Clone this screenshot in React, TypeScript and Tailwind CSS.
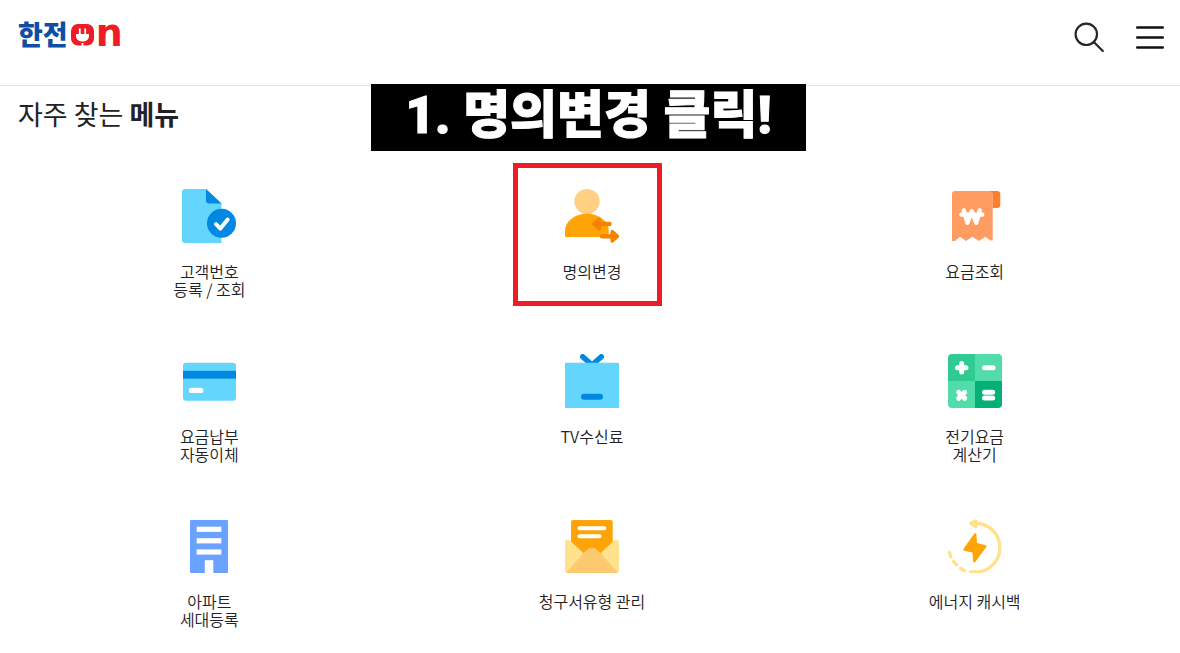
import React from "react";

interface MenuItem {
  id: string;
  lines: string[];
  icon: React.ReactNode;
  highlighted?: boolean;
}

const MENU_ITEMS: MenuItem[] = [
  { id: "customer", lines: ["고객번호", "등록 / 조회"], icon: <DocumentIcon /> },
  { id: "transfer", lines: ["명의변경"], icon: <PersonIcon />, highlighted: true },
  { id: "bill", lines: ["요금조회"], icon: <ReceiptIcon /> },
  { id: "payment", lines: ["요금납부", "자동이체"], icon: <CardIcon /> },
  { id: "tv", lines: ["TV수신료"], icon: <TvIcon /> },
  { id: "calculator", lines: ["전기요금", "계산기"], icon: <CalculatorIcon /> },
  { id: "apartment", lines: ["아파트", "세대등록"], icon: <BuildingIcon /> },
  { id: "invoice", lines: ["청구서유형 관리"], icon: <MailIcon /> },
  { id: "cashback", lines: ["에너지 캐시백"], icon: <EnergyIcon /> },
];

function DocumentIcon() {
  return (
    <svg viewBox="0 0 54 54" className="w-full h-full">
      <path d="M3 0H24L39.5 14.5V54H3a3 3 0 0 1-3-3V3a3 3 0 0 1 3-3z" fill="#64d5fc" />
      <path d="M24 0L39.5 14.5H27a3 3 0 0 1-3-3z" fill="#0088e3" />
      <circle cx="39.5" cy="34.3" r="14.5" fill="#0088e3" />
      <path d="M34 35.2l4.4 4.4 7.2-9" fill="none" stroke="#fff" strokeWidth="4" strokeLinecap="round" strokeLinejoin="round" />
    </svg>
  );
}

function PersonIcon() {
  return (
    <svg viewBox="0 0 54 54" className="w-full h-full overflow-visible">
      <circle cx="22" cy="12.5" r="12.6" fill="#fdd083" />
      <path d="M0 48V42C0 33 9 24.7 22 24.7S43.7 33 43.7 42V48z" fill="#fea408" />
      <g fill="#f58300" stroke="#f58300" strokeLinecap="round" strokeLinejoin="round">
        <path d="M34 35H44.6" strokeWidth="4.3" />
        <path d="M28.8 35l5.4-4.6v9.2z" strokeWidth="3.6" />
        <path d="M36.8 47.3H47" strokeWidth="4.3" />
        <path d="M52.4 47.3l-5.2-4.6v9.2z" strokeWidth="3.6" />
      </g>
    </svg>
  );
}

function ReceiptIcon() {
  return (
    <svg viewBox="0 0 54 54" className="w-full h-full">
      <path d="M7 2H44.7V51.5H42.5L37.3 47.8 31 52 24.3 47.8 18 52 12 47.8 7 52H4V5a3 3 0 0 1 3-3z" fill="#ff9c62" />
      <path d="M41 2h8.3a3 3 0 0 1 3 3v11a3 3 0 0 1-3 3h-4.6V6a4 4 0 0 0-3.7-4z" fill="#ff7e2e" />
      <g fill="none" stroke="#fff" strokeWidth="4.4" strokeLinecap="round" strokeLinejoin="round">
        <path d="M15.8 21.3l3.6 12.5 4.4-11.5 4.4 11.5L31.8 21.3" />
        <path d="M13.4 25.6H34.2" />
      </g>
    </svg>
  );
}

function CardIcon() {
  return (
    <svg viewBox="0 0 54 54" className="w-full h-full">
      <rect x="1" y="8.7" width="53" height="38" rx="3" fill="#64d5fc" />
      <rect x="1" y="16.8" width="53" height="7.8" fill="#0088e3" />
      <rect x="6.8" y="33.7" width="14.5" height="5.3" rx="2.6" fill="#fff" />
    </svg>
  );
}

function TvIcon() {
  return (
    <svg viewBox="0 0 54 54" className="w-full h-full">
      <path d="M17.7 2.7L27 11l9.3-8.3" fill="none" stroke="#0088e3" strokeWidth="5.4" strokeLinecap="round" />
      <rect y="8.7" width="54" height="45.3" rx="1" fill="#64d5fc" />
      <rect x="16" y="39.8" width="22" height="6" rx="3" fill="#0088e3" />
    </svg>
  );
}

function CalculatorIcon() {
  return (
    <svg viewBox="0 0 54 54" className="w-full h-full">
      <path d="M4 0H27V27H0V4a4 4 0 0 1 4-4z" fill="#2fcb91" />
      <path d="M27 0H50a4 4 0 0 1 4 4V27H27z" fill="#51dca9" />
      <path d="M0 27H27V54H4a4 4 0 0 1-4-4z" fill="#51dca9" />
      <path d="M27 27H54V50a4 4 0 0 1-4 4H27z" fill="#04b073" />
      <g stroke="#fff" strokeWidth="5" strokeLinecap="round">
        <path d="M13.7 9.5V18M9.5 13.7H18" />
        <path d="M36.5 13.7H45" />
        <path d="M10.7 38.3l6 6M16.7 38.3l-6 6" />
        <path d="M36.5 38.2H44.7M36.5 43.9H44.7" />
      </g>
    </svg>
  );
}

function BuildingIcon() {
  return (
    <svg viewBox="0 0 54 54" className="w-full h-full">
      <rect x="8" y="1" width="38" height="53" rx="1" fill="#6aa3ff" />
      <g fill="#fff">
        <rect x="14.7" y="7.7" width="24.6" height="5.2" />
        <rect x="14.7" y="19.2" width="24.6" height="5.2" />
        <rect x="14.7" y="30.4" width="24.6" height="5.2" />
        <rect x="22.8" y="41.2" width="8.5" height="12.8" />
      </g>
    </svg>
  );
}

function MailIcon() {
  return (
    <svg viewBox="0 0 54 54" className="w-full h-full">
      <path d="M8 1H45.7a2 2 0 0 1 2 2V40H6V3a2 2 0 0 1 2-2z" fill="#fea408" />
      <path d="M14.5 9.3H39.3M14.5 17.3H34.6" stroke="#fff" strokeWidth="4" strokeLinecap="round" />
      <path d="M0 23.5C0 21 3 20 5 21.5L27 42 49 21.5C51 20 54 21 54 23.5V51a3 3 0 0 1-3 3H3a3 3 0 0 1-3-3z" fill="#ffe18e" />
      <path d="M1 54L20.5 32Q27 25.5 33.5 32L53 54z" fill="#fdc96f" />
    </svg>
  );
}

function EnergyIcon() {
  return (
    <svg viewBox="0 0 54 54" className="w-full h-full">
      <g fill="none" stroke="#ffe18e" strokeWidth="3.4" strokeLinecap="round">
        <path d="M26 4.2H27.5A24.4 24.4 0 0 1 27.5 53H22.5" />
        <path d="M1.6 33.6Q2 36 2.8 37.8M5.6 42.3Q7 44.3 8.6 45.6M12.6 49.4Q14.5 50.8 16.4 51.7" />
      </g>
      <path d="M22.8 4.4l5-2.4v5.6z" fill="#ffe18e" stroke="#ffe18e" strokeWidth="3.4" strokeLinejoin="round" />
      <path d="M27.2 15.5L16.5 30.5 25.5 32.5 26.3 42.2 37.4 27.4 27.9 25z" fill="#fea408" stroke="#fea408" strokeWidth="2.4" strokeLinejoin="round" />
    </svg>
  );
}

function Logo() {
  return (
    <a href="#" aria-label="한전ON" className="flex items-start gap-0.5 h-6">
      <span className="text-[27px] leading-6 font-black text-[#0f4ea2]">한전</span>
      {/* Plug mark */}
      <svg viewBox="0 0 24 24" className="w-6 h-6">
        <path d="M8 2H17a7 7 0 0 1 7 7V16.5a7 7 0 0 1-7 7H8a7 7 0 0 1-7-7V9a7 7 0 0 1 7-7z" fill="#ee1c25" />
        <path d="M6 12H19V14.5a5.5 5.5 0 0 1-5.5 5H11.5A5.5 5.5 0 0 1 6 14.500z" fill="#fff" />
        <path d="M9.8 6.5V12M15.2 6.5V12M12.5 21V24" stroke="#fff" strokeWidth="1.8" />
      </svg>
      <span className="text-[38px] leading-[22px] font-bold text-[#ee1c25] font-['DejaVu_Sans',sans-serif]">n</span>
    </a>
  );
}

function Header() {
  return (
    <header className="flex items-start justify-between h-[86px] pl-[18px] pr-4 pt-[22px] border-b border-[#e1e1e6]">
      <Logo />
      <div className="flex items-center gap-8">
        <button type="button" aria-label="검색" className="w-[30px] h-[30px]">
          <svg viewBox="0 0 30 30" className="w-full h-full" fill="none" stroke="#26262b" strokeWidth="2.2" strokeLinecap="round">
            <circle cx="12.3" cy="12.3" r="10.7" />
            <path d="M19.8 20l9 9" />
          </svg>
        </button>
        <button type="button" aria-label="전체 메뉴" className="w-[28px] h-[30px]">
          <svg viewBox="0 0 28 30" className="w-full h-full" stroke="#111" strokeWidth="2.4" strokeLinecap="round">
            <path d="M1.2 5.5H26.8M1.2 15.5H26.8M1.2 25.5H26.8" />
          </svg>
        </button>
      </div>
    </header>
  );
}

function MenuLink({ item }: { item: MenuItem }) {
  return (
    <li className="relative flex justify-center">
      <a href={`#${item.id}`} className="flex flex-col items-center">
        <span className="w-[54px] h-[54px]">{item.icon}</span>
        <span className="mt-[19px] min-h-9 text-base leading-[18px] font-[350] text-center whitespace-nowrap">
          {item.lines.map((line) => (
            <span key={line} className="block">
              {line}
            </span>
          ))}
        </span>
      </a>
      {item.highlighted && (
        <div className="absolute -top-[26px] left-1/2 -ml-[79px] w-[149px] h-[143px] border-5 border-[#ee1c25] pointer-events-none" />
      )}
    </li>
  );
}

export default function App() {
  return (
    <div className="relative min-h-screen bg-white text-[#222226] font-['Noto_Sans_CJK_KR',sans-serif]">
      <Header />

      <main className="pl-[18px] pr-[14px] pt-[11px] pb-6">
        <h1 className="text-[27px] leading-[34px] font-normal">
          자주 찾는 <strong className="font-bold">메뉴</strong>
        </h1>

        <ul className="grid grid-cols-3 gap-y-14 mt-[58px]">
          {MENU_ITEMS.map((item) => (
            <MenuLink key={item.id} item={item} />
          ))}
        </ul>
      </main>

      {/* Step caption over the page */}
      <div className="absolute top-[84px] left-1/2 -ml-[219px] w-[435px] h-[67px] pb-1 bg-black flex items-center justify-center">
        <p className="text-[51px] leading-[60px] font-black text-white whitespace-nowrap font-[Roboto,'Noto_Sans_CJK_KR',sans-serif] [-webkit-text-stroke:1px_white]">
          1. 명의변경 클릭!
        </p>
      </div>
    </div>
  );
}
